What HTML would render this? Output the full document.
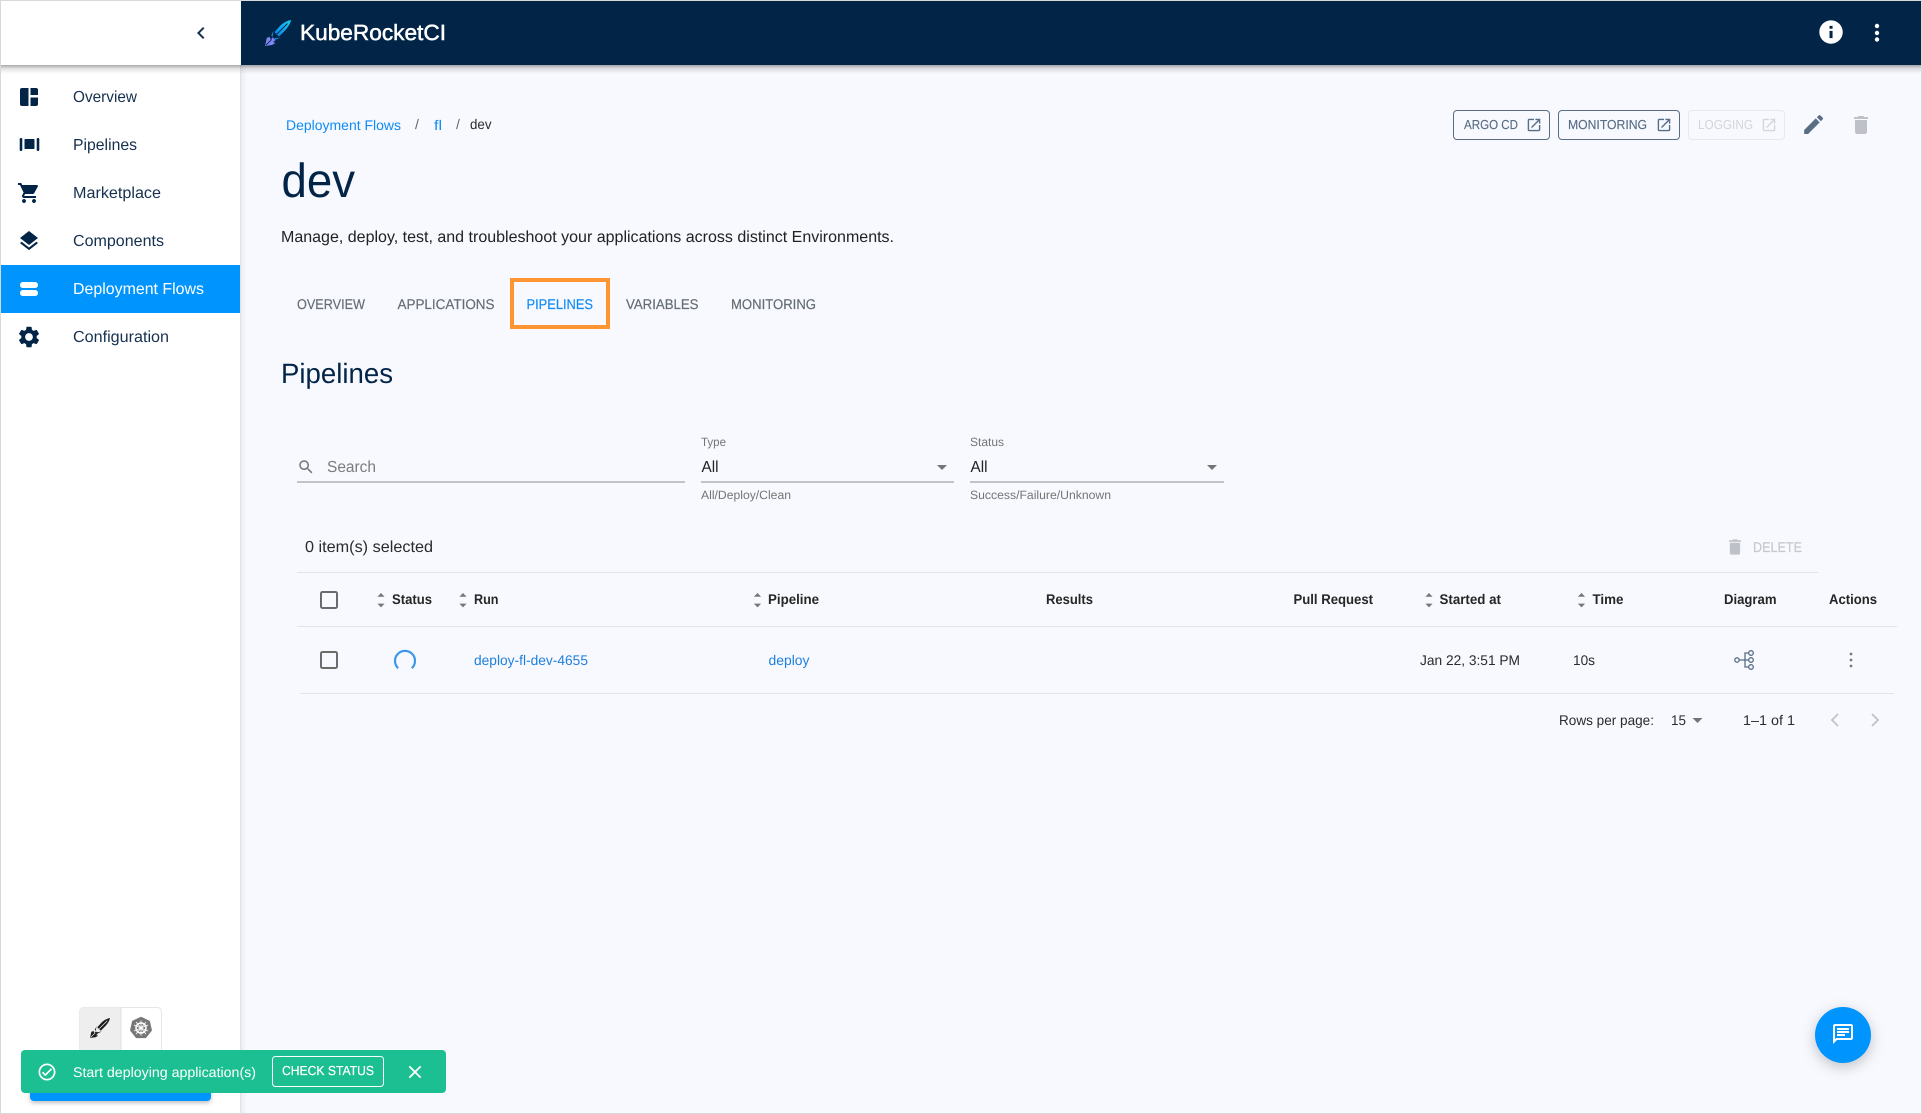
<!DOCTYPE html>
<html lang="en">
<head>
<meta charset="utf-8">
<title>KubeRocketCI - dev</title>
<style>
html,body{margin:0;padding:0;width:1922px;height:1114px;overflow:hidden;background:#f7f9ff}
svg{display:block;filter:blur(.3px)}
text{font-family:"Liberation Sans",Arial,sans-serif;text-rendering:geometricPrecision}
.nav{font-size:16px;fill:#16304f}
.tab{font-size:14px;fill:#666c75;stroke:#666c75;stroke-width:.2}
.th{font-size:14px;font-weight:bold;fill:#262626}
.td{font-size:14px;fill:#2b2b2b}
.lnk{font-size:14px;fill:#1f7fdc}
.lbl{font-size:12px;fill:#757575}
.val{font-size:16px;fill:#222}
.btn{font-size:14px;fill:#596d85;stroke:#596d85;stroke-width:.15}
</style>
</head>
<body>
<svg xmlns="http://www.w3.org/2000/svg" width="1922" height="1114" viewBox="0 0 1922 1114">
<defs>
<linearGradient id="shadeDown" x1="0" y1="0" x2="0" y2="1"><stop offset="0" stop-color="#000" stop-opacity=".34"/><stop offset=".4" stop-color="#000" stop-opacity=".11"/><stop offset="1" stop-color="#000" stop-opacity="0"/></linearGradient>
<linearGradient id="shadeRight" x1="0" y1="0" x2="1" y2="0"><stop offset="0" stop-color="#000" stop-opacity=".05"/><stop offset="1" stop-color="#000" stop-opacity="0"/></linearGradient>
<linearGradient id="blade" x1="0" y1="1" x2="1" y2="0"><stop offset="0" stop-color="#0a7fe8"/><stop offset="1" stop-color="#19d0f5"/></linearGradient>
<path id="openNew" d="M19 19H5V5h7V3H5c-1.11 0-2 .9-2 2v14c0 1.1.89 2 2 2h14c1.1 0 2-.9 2-2v-7h-2v7zM14 3v2h3.59l-9.83 9.83 1.41 1.41L19 6.41V10h2V3h-7z"/>
<path id="trash" d="M6 19c0 1.1.9 2 2 2h8c1.1 0 2-.9 2-2V7H6v12zM19 4h-3.5l-1-1h-5l-1 1H5v2h14V4z"/>
<g id="sort"><path d="M-3.6 -3.2L0 -7L3.6 -3.2z"/><path d="M-3.6 3.6L0 7.4L3.6 3.6z"/></g>
</defs>

<!-- page -->
<rect width="1922" height="1114" fill="#f7f9ff"/>

<!-- sidebar -->
<rect x="1" y="1" width="239" height="1112" fill="#fff"/>
<rect x="240" y="65" width="1" height="1048" fill="#e2e3e6"/>
<rect x="241" y="65" width="6" height="1048" fill="url(#shadeRight)"/>

<!-- header -->
<rect x="241" y="1" width="1680" height="64" fill="#022547"/>
<rect x="1" y="65" width="1920" height="9" fill="url(#shadeDown)"/>
<path d="M15.41 7.41L14 6l-6 6 6 6 1.41-1.41L10.83 12z" transform="translate(189,21)" fill="#16304f"/>

<!-- logo -->
<g id="logo">
<path d="M291 20C288 20.500 283 22.500 279.500 26.500L274.500 32L279 36.500L284.500 31C288.500 27 290.500 23 291 20Z" fill="url(#blade)"/>
<path d="M287.500 23.500L277 34" stroke="#022547" stroke-width="1"/>
<path d="M273.500 30.500L271.300 35.500L272.600 36.800ZM280.500 37.500L275.300 39.800L274 38.500Z" fill="#1790ee"/>
<path d="M265 46L266.800 38L269.500 36.800L270.500 39.500L272.800 37.400L275.500 40.200L273 42L275.600 43L272 45Z" fill="#7f86f2"/>
<path d="M265.800 45.200L271.800 39.300" stroke="#022547" stroke-width=".8"/>
</g>
<text x="300" y="40" font-size="22" fill="#fff" stroke="#fff" stroke-width=".5" textLength="146" lengthAdjust="spacingAndGlyphs">KubeRocketCI</text>

<path d="M12 2C6.48 2 2 6.48 2 12s4.480 10 10 10 10-4.480 10-10S17.520 2 12 2zm1.300 15.200h-2.600v-6.200h2.600v6.200zm0-8h-2.600V6.700h2.600v2.500z" transform="translate(1817,18) scale(1.17)" fill="#fff"/>
<g fill="#fff"><circle cx="1877" cy="26" r="2.200"/><circle cx="1877" cy="33" r="2.200"/><circle cx="1877" cy="39.500" r="2.200"/></g>

<!-- sidebar nav -->
<rect x="1" y="265" width="239" height="48" fill="#0094ff"/>
<g fill="#022547">
<path d="M20 90a2 2 0 0 1 2-2h6.500v18H22a2 2 0 0 1-2-2zM30.500 88H36a2 2 0 0 1 2 2v5h-7.500zM30.500 97.500H38V104a2 2 0 0 1-2 2h-5.500z"/>
<rect x="24.500" y="139" width="10" height="10" rx=".8"/><rect x="19.700" y="138" width="2.600" height="13" rx="1.100"/><rect x="36.700" y="138" width="2.600" height="13" rx="1.100"/>
<path transform="translate(17,181)" d="M7 18c-1.100 0-1.990.9-1.990 2S5.900 22 7 22s2-.9 2-2-.9-2-2-2zM1 2v2h2l3.600 7.590-1.350 2.450c-.16.28-.25.61-.25.96 0 1.100.9 2 2 2h12v-2H7.420c-.14 0-.25-.11-.25-.25l.03-.12.9-1.630h7.450c.75 0 1.410-.41 1.750-1.030l3.580-6.490c.08-.14.12-.31.12-.48 0-.55-.45-1-1-1H5.210l-.94-2H1zm16 16c-1.100 0-1.990.9-1.990 2s.89 2 1.990 2 2-.9 2-2-.9-2-2-2z"/>
<path transform="translate(17,229)" d="M11.990 18.540l-7.370-5.730L3 14.070l9 7 9-7-1.630-1.270-7.380 5.740zM12 16l7.360-5.730L21 9l-9-7-9 7 1.630 1.270L12 16z"/>
<path transform="translate(16.160,324.160) scale(1.070)" d="M19.140 12.940c.04-.3.06-.61.06-.94 0-.32-.02-.64-.07-.94l2.030-1.580c.18-.14.23-.41.12-.61l-1.920-3.320c-.12-.22-.37-.29-.59-.22l-2.390.96c-.5-.38-1.030-.7-1.620-.94l-.36-2.540c-.04-.24-.24-.41-.48-.41h-3.840c-.24 0-.43.17-.47.41l-.36 2.540c-.59.24-1.130.57-1.620.94l-2.390-.96c-.22-.08-.47 0-.59.22L2.740 8.870c-.12.21-.08.47.12.61l2.030 1.580c-.05.3-.09.63-.09.94s.02.64.07.94l-2.030 1.580c-.18.14-.23.41-.12.61l1.920 3.320c.12.22.37.29.59.22l2.390-.96c.5.38 1.030.7 1.620.94l.36 2.540c.05.24.24.41.48.41h3.840c.24 0 .44-.17.47-.41l.36-2.540c.59-.24 1.130-.56 1.620-.94l2.390.96c.22.08.47 0 .59-.22l1.920-3.320c.12-.22.07-.47-.12-.61l-2.010-1.580zM12 15.600c-1.980 0-3.600-1.620-3.600-3.600s1.620-3.600 3.600-3.600 3.600 1.620 3.600 3.600-1.620 3.600-3.600 3.600z"/>
</g>
<rect x="20" y="282" width="18" height="6" rx="2.800" fill="#fff"/><rect x="20" y="290" width="18" height="6" rx="2.800" fill="#fff"/>
<text class="nav" x="73" y="102" textLength="64" lengthAdjust="spacingAndGlyphs">Overview</text>
<text class="nav" x="73" y="150" textLength="64" lengthAdjust="spacingAndGlyphs">Pipelines</text>
<text class="nav" x="73" y="198" textLength="88" lengthAdjust="spacingAndGlyphs">Marketplace</text>
<text class="nav" x="73" y="246" textLength="91" lengthAdjust="spacingAndGlyphs">Components</text>
<text class="nav" x="73" y="294" style="fill:#fff" textLength="131" lengthAdjust="spacingAndGlyphs">Deployment Flows</text>
<text class="nav" x="73" y="342" textLength="96" lengthAdjust="spacingAndGlyphs">Configuration</text>

<!-- breadcrumbs -->
<text x="286" y="130" font-size="14" fill="#0f8cf5" textLength="115" lengthAdjust="spacingAndGlyphs">Deployment Flows</text>
<text x="415" y="129" font-size="14" fill="#666">/</text>
<text x="434" y="130" font-size="14" fill="#0f8cf5" textLength="8" lengthAdjust="spacingAndGlyphs">fl</text>
<text x="456" y="129" font-size="14" fill="#666">/</text>
<text x="470" y="129" font-size="14" fill="#2b2b2b" textLength="21.500" lengthAdjust="spacingAndGlyphs">dev</text>

<!-- title -->
<text x="281.500" y="197" font-size="48" fill="#022547" textLength="73.500" lengthAdjust="spacingAndGlyphs">dev</text>
<text x="281" y="242" font-size="16" fill="#222" textLength="613" lengthAdjust="spacingAndGlyphs">Manage, deploy, test, and troubleshoot your applications across distinct Environments.</text>

<!-- top action buttons -->
<rect x="1453.500" y="110.500" width="96" height="29" rx="3.500" fill="none" stroke="#596d85"/>
<text class="btn" x="1464" y="129" textLength="54" lengthAdjust="spacingAndGlyphs" style="font-size:13px">ARGO CD</text>
<use href="#openNew" transform="translate(1525.600,116.600) scale(.7)" fill="#596d85"/>
<rect x="1558.500" y="110.500" width="121" height="29" rx="3.500" fill="none" stroke="#596d85"/>
<text class="btn" x="1568" y="129" textLength="79" lengthAdjust="spacingAndGlyphs" style="font-size:13px">MONITORING</text>
<use href="#openNew" transform="translate(1655.600,116.600) scale(.7)" fill="#596d85"/>
<rect x="1688.500" y="110.500" width="96" height="29" rx="3.500" fill="none" stroke="#e6e8ee"/>
<text x="1698" y="129" font-size="13" fill="#d3d5da" textLength="55" lengthAdjust="spacingAndGlyphs">LOGGING</text>
<use href="#openNew" transform="translate(1760.600,116.600) scale(.7)" fill="#d3d5da"/>
<path transform="translate(1801,111.900) scale(1.050)" fill="#596d85" d="M3 17.250V21h3.750L17.810 9.940l-3.750-3.750L3 17.250zM20.710 7.040c.39-.39.39-1.020 0-1.410l-2.340-2.340c-.39-.39-1.020-.39-1.410 0l-1.830 1.830 3.750 3.750 1.830-1.830z"/>
<use href="#trash" transform="translate(1849,113)" fill="#bfc1c8"/>

<!-- tabs -->
<text class="tab" x="297" y="309" textLength="68" lengthAdjust="spacingAndGlyphs">OVERVIEW</text>
<text class="tab" x="397.500" y="309" textLength="97" lengthAdjust="spacingAndGlyphs">APPLICATIONS</text>
<text class="tab" x="526.500" y="309" style="fill:#0f8cf5;stroke:#0f8cf5" textLength="66.500" lengthAdjust="spacingAndGlyphs">PIPELINES</text>
<text class="tab" x="626" y="309" textLength="72.500" lengthAdjust="spacingAndGlyphs">VARIABLES</text>
<text class="tab" x="731" y="309" textLength="85" lengthAdjust="spacingAndGlyphs">MONITORING</text>
<rect x="512" y="280" width="96" height="47" fill="none" stroke="#ff9532" stroke-width="4"/>

<text x="281" y="383" font-size="28" fill="#022547" textLength="112" lengthAdjust="spacingAndGlyphs">Pipelines</text>

<!-- filters -->
<path transform="translate(297,458) scale(.75)" fill="#757575" d="M15.500 14h-.79l-.28-.27C15.410 12.590 16 11.110 16 9.500 16 5.910 13.090 3 9.500 3S3 5.910 3 9.500 5.910 16 9.500 16c1.610 0 3.090-.59 4.230-1.570l.27.28v.79l5 4.990L20.490 19l-4.990-5zm-6 0C7.010 14 5 11.990 5 9.500S7.010 5 9.500 5 14 7.010 14 9.500 11.990 14 9.500 14z"/>
<text x="327" y="472" font-size="16" fill="#7c7c7c" textLength="49" lengthAdjust="spacingAndGlyphs">Search</text>
<rect x="297" y="481.500" width="388" height="1" fill="#8d8d8d"/>

<text class="lbl" x="701" y="446" textLength="25" lengthAdjust="spacingAndGlyphs">Type</text>
<text class="val" x="701.500" y="472" textLength="17" lengthAdjust="spacingAndGlyphs">All</text>
<path d="M937 465h10l-5 5z" fill="#757575"/>
<rect x="701" y="481.500" width="253" height="1" fill="#8d8d8d"/>
<text class="lbl" x="701" y="499" textLength="90" lengthAdjust="spacingAndGlyphs">All/Deploy/Clean</text>

<text class="lbl" x="970" y="446" textLength="34" lengthAdjust="spacingAndGlyphs">Status</text>
<text class="val" x="970.500" y="472" textLength="17" lengthAdjust="spacingAndGlyphs">All</text>
<path d="M1207 465h10l-5 5z" fill="#757575"/>
<rect x="970" y="481.500" width="254" height="1" fill="#8d8d8d"/>
<text class="lbl" x="970" y="499" textLength="141" lengthAdjust="spacingAndGlyphs">Success/Failure/Unknown</text>

<!-- selection row -->
<text x="305" y="552" font-size="16" fill="#2b2b2b" textLength="128" lengthAdjust="spacingAndGlyphs">0 item(s) selected</text>
<use href="#trash" transform="translate(1724.800,536.800) scale(.85)" fill="#bfc1c8"/>
<text x="1753" y="552" font-size="14" fill="#c6c8ce" stroke="#c6c8ce" stroke-width=".2" textLength="49" lengthAdjust="spacingAndGlyphs">DELETE</text>

<!-- table -->
<rect x="297" y="572" width="1521" height="1" fill="#e2e3e7"/>
<rect x="297" y="626" width="1600" height="1" fill="#e2e3e7"/>
<rect x="300" y="693" width="1594" height="1" fill="#e2e3e7"/>

<rect x="321" y="592" width="16" height="16" rx="1.500" fill="none" stroke="#6b6b6b" stroke-width="2"/>
<g fill="#757575">
<use href="#sort" transform="translate(381,600)"/>
<use href="#sort" transform="translate(463,600)"/>
<use href="#sort" transform="translate(757.500,600)"/>
<use href="#sort" transform="translate(1429,600)"/>
<use href="#sort" transform="translate(1581.500,600)"/>
</g>
<text class="th" x="392" y="604" textLength="40" lengthAdjust="spacingAndGlyphs">Status</text>
<text class="th" x="474" y="604" textLength="24.500" lengthAdjust="spacingAndGlyphs">Run</text>
<text class="th" x="768" y="604" textLength="51" lengthAdjust="spacingAndGlyphs">Pipeline</text>
<text class="th" x="1046" y="604" textLength="47" lengthAdjust="spacingAndGlyphs">Results</text>
<text class="th" x="1293.500" y="604" textLength="79.500" lengthAdjust="spacingAndGlyphs">Pull Request</text>
<text class="th" x="1439.500" y="604" textLength="61.500" lengthAdjust="spacingAndGlyphs">Started at</text>
<text class="th" x="1592.500" y="604" textLength="31" lengthAdjust="spacingAndGlyphs">Time</text>
<text class="th" x="1724" y="604" textLength="52.500" lengthAdjust="spacingAndGlyphs">Diagram</text>
<text class="th" x="1829" y="604" textLength="48" lengthAdjust="spacingAndGlyphs">Actions</text>

<rect x="321" y="652" width="16" height="16" rx="1.500" fill="none" stroke="#6b6b6b" stroke-width="2"/>
<path d="M398.200 668.200A10 10 0 1 1 411.800 668.200" fill="none" stroke="#3a97ec" stroke-width="2.200"/>
<text class="lnk" x="474" y="665" textLength="114" lengthAdjust="spacingAndGlyphs">deploy-fl-dev-4655</text>
<text class="lnk" x="768.500" y="665" textLength="41" lengthAdjust="spacingAndGlyphs">deploy</text>
<text class="td" x="1420" y="665" textLength="100" lengthAdjust="spacingAndGlyphs">Jan 22, 3:51 PM</text>
<text class="td" x="1573" y="665" textLength="22" lengthAdjust="spacingAndGlyphs">10s</text>
<g fill="none" stroke="#596d85" stroke-width="1.300">
<circle cx="1737" cy="660" r="2.200"/><circle cx="1751" cy="653" r="2.300"/><circle cx="1751" cy="660" r="2.300"/><circle cx="1751" cy="667" r="2.300"/>
<path d="M1739 660h9.500M1745 660v-7h3.700M1745 660v7h3.700"/>
</g>
<g fill="#7a7a7a"><circle cx="1851" cy="654" r="1.400"/><circle cx="1851" cy="660" r="1.400"/><circle cx="1851" cy="666" r="1.400"/></g>

<!-- pagination -->
<text class="td" x="1559" y="725" textLength="95" lengthAdjust="spacingAndGlyphs">Rows per page:</text>
<text class="td" x="1671" y="725" textLength="15" lengthAdjust="spacingAndGlyphs">15</text>
<path d="M1692.500 718h10l-5 5z" fill="#757575"/>
<text class="td" x="1743" y="725" textLength="52" lengthAdjust="spacingAndGlyphs">1–1 of 1</text>
<path d="M1838 714l-6 6 6 6" fill="none" stroke="#c0c2c8" stroke-width="1.800"/>
<path d="M1872 714l6 6-6 6" fill="none" stroke="#c0c2c8" stroke-width="1.800"/>

<!-- theme toggle -->
<rect x="79.500" y="1007.500" width="82" height="50" rx="4" fill="#fff" stroke="#e6e6e6"/>
<path d="M83 1007.500H120.500V1050H79.500V1011a3.500 3.500 0 0 1 3.500-3.500z" fill="#eee"/>
<rect x="120.500" y="1008" width="1" height="42" fill="#e2e2e2"/>
<g transform="translate(-114.070,1002.600) scale(.77)">
<path d="M291 20C288 20.500 283 22.500 279.500 26.500L274.500 32L279 36.500L284.500 31C288.500 27 290.500 23 291 20Z" fill="#1c1c1c"/>
<path d="M287.500 23.500L277 34" stroke="#eee" stroke-width=".9"/>
<path d="M273.500 30.500L271.300 35.500L272.600 36.800ZM280.500 37.500L275.300 39.800L274 38.500Z" fill="#1c1c1c"/>
<path d="M265 46L266.800 38L269.500 36.800L270.500 39.500L272.800 37.400L275.500 40.200L273 42L275.600 43L272 45Z" fill="#1c1c1c"/>
<path d="M265.800 45.200L271.800 39.300" stroke="#eee" stroke-width=".8"/>
</g>
<polygon points="141,1017.500 149.200,1021.400 151.200,1030.300 145.500,1037.400 136.500,1037.400 130.800,1030.300 132.800,1021.400" fill="#777" stroke="#777" stroke-width="1.500" stroke-linejoin="round"/>
<g fill="none" stroke="#fff">
<circle cx="141" cy="1028" r="5" stroke-width="1.500"/>
<path d="M141 1020.500v15M134 1025l14 6M148 1025l-14 6M136 1034l10-12M146 1034l-10-12" stroke-width=".9"/>
</g>

<!-- blue button behind toast -->
<rect x="30" y="1080" width="181" height="21" rx="4" fill="#0094ff" style="filter:drop-shadow(0 2px 2px rgba(0,0,0,.25))"/>

<!-- toast -->
<rect x="21" y="1050" width="425" height="43" rx="4" fill="#1bbf92"/>
<path transform="translate(36.800,1061.800) scale(.85)" fill="#fff" d="M16.590 7.580L10 14.170l-2.590-2.580L6 13l4 4 8-8zM12 2C6.470 2 2 6.470 2 12s4.470 10 10 10 10-4.470 10-10S17.530 2 12 2zm0 18c-4.420 0-8-3.580-8-8s3.580-8 8-8 8 3.580 8 8-3.580 8-8 8z"/>
<text x="73" y="1077" font-size="14" fill="#fff" textLength="183" lengthAdjust="spacingAndGlyphs">Start deploying application(s)</text>
<rect x="272.500" y="1056.500" width="111" height="30" rx="3" fill="none" stroke="#fff"/>
<text x="282" y="1075" font-size="13" fill="#fff" stroke="#fff" stroke-width=".2" textLength="92" lengthAdjust="spacingAndGlyphs">CHECK STATUS</text>
<path transform="translate(404.200,1061.200) scale(.9)" fill="#fff" d="M19 6.410L17.590 5 12 10.590 6.410 5 5 6.410 10.590 12 5 17.590 6.410 19 12 13.410 17.590 19 19 17.590 13.410 12z"/>

<!-- chat fab -->
<circle cx="1843" cy="1035" r="28" fill="#0094ff" style="filter:drop-shadow(0 4px 7px rgba(0,0,0,.22))"/>
<path transform="translate(1831,1022)" fill="#fff" d="M20 2H4c-1.100 0-2 .9-2 2v18l4-4h14c1.100 0 2-.9 2-2V4c0-1.100-.9-2-2-2zm0 14H5.170L4 17.170V4h16v12zM6 12h8v2H6zm0-3h12v2H6zm0-3h12v2H6z"/>

<!-- screenshot frame -->
<rect x=".5" y=".5" width="1921" height="1113" fill="none" stroke="#d9d9d9"/>
</svg>
</body>
</html>
